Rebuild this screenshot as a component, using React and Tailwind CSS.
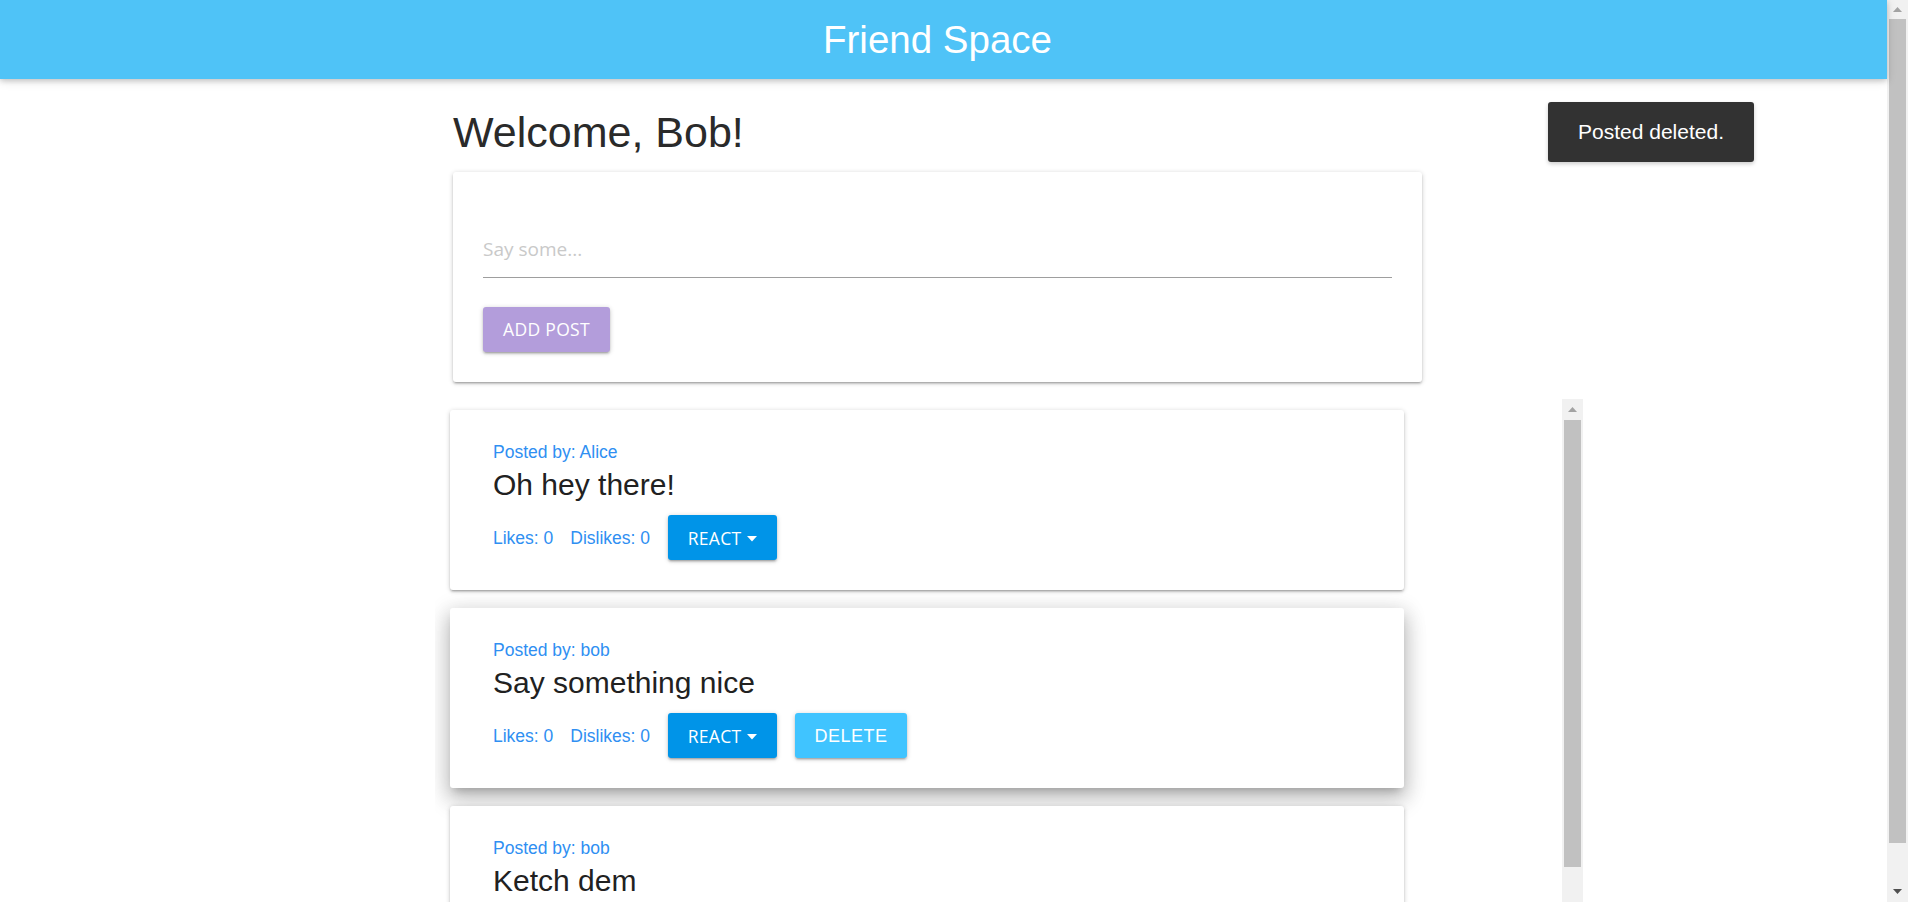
import React from 'react';

const posts = [
  { id: 1, author: 'Alice', text: 'Oh hey there!', likes: 0, dislikes: 0, mine: false },
  { id: 2, author: 'bob', text: 'Say something nice', likes: 0, dislikes: 0, mine: true, hovered: true },
  { id: 3, author: 'bob', text: 'Ketch dem', likes: 0, dislikes: 0, mine: true },
];

const depth1 = 'shadow-[0_2px_2px_0_rgba(0,0,0,0.14),0_3px_1px_-2px_rgba(0,0,0,0.12),0_1px_5px_0_rgba(0,0,0,0.2)]';

function Caret() {
  return (
    <svg width="10" height="6" viewBox="0 0 10 6" className="ml-[6px] mt-[3px]">
      <path d="M0 0 L10 0 L5 5.5 Z" fill="white" />
    </svg>
  );
}

// arrow glyph for the scrollbar buttons
function Arrow({ up, color }) {
  return (
    <svg width="9" height="5" viewBox="0 0 9 5">
      <path d={up ? 'M0 5 L9 5 L4.5 0 Z' : 'M0 0 L9 0 L4.5 5 Z'} fill={color} />
    </svg>
  );
}

function PostCard({ post }) {
  return (
    <div
      className={`mb-[18px] w-[954px] rounded-[3px] bg-white px-[43px] pt-[29px] pb-[30px] ${
        post.hovered
          ? 'shadow-[0_12px_22px_2px_rgba(0,0,0,0.16),0_4px_20px_4px_rgba(0,0,0,0.12),0_6px_8px_-4px_rgba(0,0,0,0.2)]'
          : depth1
      }`}
    >
      <p className="text-[17.5px] leading-[26px] text-[#2f8ff2]">Posted by: {post.author}</p>
      <h2 className="mt-[3px] text-[30px] leading-[33px] text-[#212121]">{post.text}</h2>
      <div className="mt-[14px] flex items-center text-[17.5px] leading-[26px] text-[#2f8ff2]">
        <span>Likes: {post.likes}</span>
        <span className="ml-[17px]">Dislikes: {post.dislikes}</span>
        <button
          className={`ml-[18px] flex h-[45px] w-[109px] items-center justify-center rounded-[3px] bg-[#0094e8] font-['Open_Sans',sans-serif] text-[17.5px] tracking-[0.3px] text-white ${depth1}`}
        >
          REACT
          <Caret />
        </button>
        {post.mine && (
          <button
            className={`ml-[18px] flex h-[45px] w-[112px] items-center justify-center rounded-[3px] bg-[#40c4ff] text-[18px] tracking-[0.5px] text-white ${depth1}`}
          >
            DELETE
          </button>
        )}
      </div>
    </div>
  );
}

export default function App() {
  return (
    <div className="flex h-[902px] overflow-hidden bg-white font-['Liberation_Sans',Arial,sans-serif]">
      <div className="relative min-w-0 flex-1">
        <header className="relative z-10 flex h-[79px] items-center justify-center bg-[#4fc3f7] pr-[12px] shadow-[0_2px_5px_0_rgba(0,0,0,0.16),0_2px_10px_0_rgba(0,0,0,0.12)]">
          <h1 className="text-[38.5px] leading-[79px] text-white">Friend Space</h1>
        </header>

        <main className="pl-[435px]">
          <div className="w-[1148px]">
            <h1 className="ml-[18px] mt-[30px] mb-[17px] text-[43px] leading-[46px] text-[#2a2a2a]">Welcome, Bob!</h1>

            <div className={`ml-[18px] w-[969px] rounded-[3px] bg-white px-[30px] pt-[46px] pb-[30px] ${depth1}`}>
              <input
                type="text"
                placeholder="Say some..."
                className="block h-[60px] w-full border-b border-[#9e9e9e] bg-transparent pt-[3px] font-['Open_Sans',sans-serif] text-[19px] text-[#212121] outline-none placeholder:text-[#c9c9c9]"
              />
              <button
                className={`mt-[29px] h-[45px] w-[127px] rounded-[3px] bg-[#b39ddb] font-['Open_Sans',sans-serif] text-[17.5px] tracking-[0.3px] text-white ${depth1}`}
              >
                ADD POST
              </button>
            </div>

            <div className="mt-[17px] flex h-[600px]">
              <div className="min-w-0 flex-1 overflow-hidden pl-[15px] pt-[11px]">
                {posts.map((post) => (
                  <PostCard key={post.id} post={post} />
                ))}
              </div>
              <div className="flex w-[21px] flex-col items-center bg-[#f1f1f1]">
                <div className="flex h-[21px] w-full items-center justify-center">
                  <Arrow up color="#a3a3a3" />
                </div>
                <div className="h-[447px] w-[17px] bg-[#c1c1c1]" />
              </div>
            </div>
          </div>
        </main>

        <div className="absolute left-[1548px] top-[102px] flex h-[60px] w-[206px] items-center justify-center rounded-[3px] bg-[#323232] text-[21px] text-white shadow-[0_2px_4px_0_rgba(0,0,0,0.2)]">
          Posted deleted.
        </div>
      </div>

      <div className="flex w-[21px] shrink-0 flex-col items-center bg-[#f1f1f1]">
        <div className="flex h-[19px] w-full items-center justify-center">
          <Arrow up color="#a3a3a3" />
        </div>
        <div className="h-[824px] w-[17px] bg-[#c1c1c1]" />
        <div className="flex flex-1 items-end justify-center pb-[8px]">
          <Arrow color="#505050" />
        </div>
      </div>
    </div>
  );
}
